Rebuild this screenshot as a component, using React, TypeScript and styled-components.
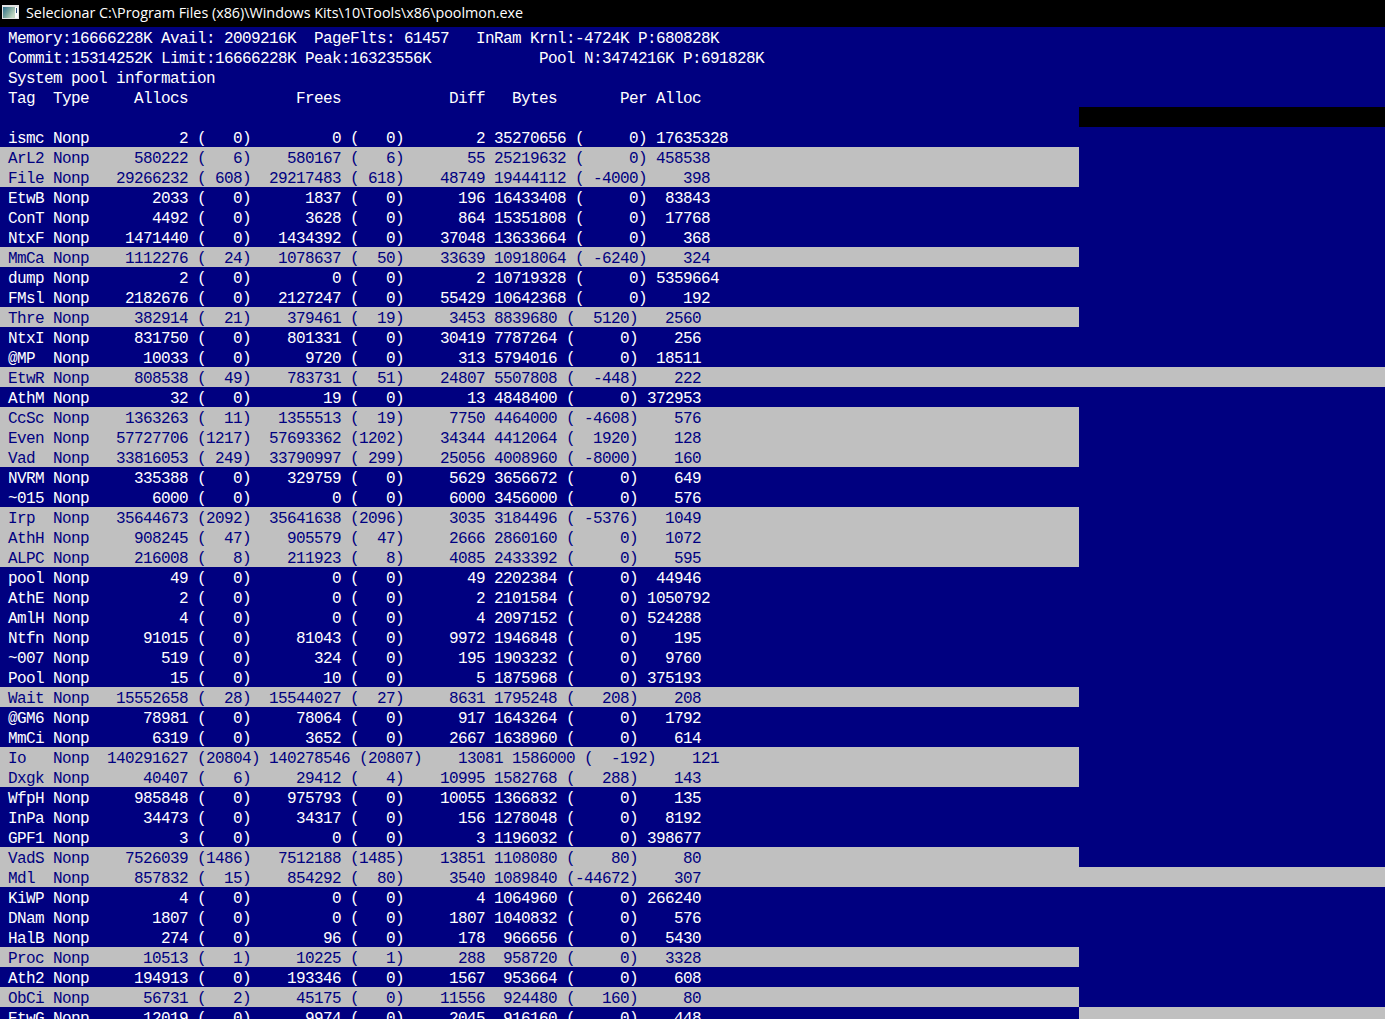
import React from "react";
import styled, { createGlobalStyle } from "styled-components";

const NAVY = "#000080";
const GREY = "#c0c0c0";
const TEXT = "#ffffff";

const GlobalStyle = createGlobalStyle`
  html, body { margin: 0; padding: 0; background: ${NAVY}; overflow: hidden; }
`;

const Window = styled.div`
  display: flex;
  flex-direction: column;
  width: 1385px;
  height: 1019px;
  overflow: hidden;
`;

const TitleBar = styled.div`
  display: flex;
  flex: none;
  align-items: flex-start;
  gap: 7px;
  height: 27px;
  padding: 0 0 0 2px;
  background: #000;
`;

const WindowTitle = styled.span`
  color: #fff;
  font-family: "Open Sans", "Noto Sans", sans-serif;
  font-size: 14.34px;
  line-height: 26px;
  white-space: pre;
`;

const IconSlot = styled.span`
  display: block;
  flex: none;
  width: 17px;
  height: 14px;
  margin-top: 5px;
`;

const Screen = styled.div`
  display: flex;
  flex-direction: column;
  flex: none;
`;

type Tone = "navy" | "grey" | "black";
const bg: Record<Tone, string> = { navy: NAVY, grey: GREY, black: "#000" };

const Row = styled.div`
  display: flex;
  flex: none;
  height: 20px;
`;

const Line = styled.div<{ $tone: Tone }>`
  flex: none;
  box-sizing: border-box;
  width: 1079px;
  height: 20px;
  padding-left: 8px;
  background: ${(p) => bg[p.$tone]};
  color: ${(p) => (p.$tone === "grey" ? NAVY : TEXT)};
  font-family: "Liberation Mono", "DejaVu Sans Mono", monospace;
  font-size: 16px;
  letter-spacing: -0.6016px;
  line-height: 24px;
  white-space: pre;
  font-kerning: none;
`;

const Filler = styled.div<{ $tone: Tone }>`
  flex: 1;
  height: 20px;
  background: ${(p) => bg[p.$tone]};
`;

const ConsoleIcon = () => (
  <IconSlot>
    <svg width="17" height="14" viewBox="0 0 17 14" aria-hidden="true" style={{ display: "block" }}>
      <defs>
        <linearGradient id="pane" x1="0" y1="0" x2="1" y2="0.6">
          <stop offset="0" stopColor="#2f6f8f" />
          <stop offset="0.55" stopColor="#7fa89e" />
          <stop offset="1" stopColor="#c4d8c4" />
        </linearGradient>
      </defs>
      <rect x="0" y="0" width="17" height="14" fill="#e4e4e4" />
      <rect x="1" y="2" width="12" height="11" fill="url(#pane)" />
      <rect x="13" y="2" width="3" height="11" fill="#fafafa" />
      <rect x="14" y="3" width="1" height="5" fill="#2c4f7a" />
    </svg>
  </IconSlot>
);

const header = [
  "Memory:16666228K Avail: 2009216K  PageFlts: 61457   InRam Krnl:-4724K P:680828K",
  "Commit:15314252K Limit:16666228K Peak:16323556K            Pool N:3474216K P:691828K",
  "System pool information",
  "Tag  Type     Allocs            Frees            Diff   Bytes       Per Alloc",
];

// tag allocs (n) frees (n) diff bytes (n) per  kind
// kind: b = navy, g = grey up to the edge of the buffer, w = grey over the whole width, t = navy with stale grey beyond
const data = `ismc 2 0 0 0 2 35270656 0 17635328 b
ArL2 580222 6 580167 6 55 25219632 0 458538 g
File 29266232 608 29217483 618 48749 19444112 -4000 398 g
EtwB 2033 0 1837 0 196 16433408 0 83843 b
ConT 4492 0 3628 0 864 15351808 0 17768 b
NtxF 1471440 0 1434392 0 37048 13633664 0 368 b
MmCa 1112276 24 1078637 50 33639 10918064 -6240 324 g
dump 2 0 0 0 2 10719328 0 5359664 b
FMsl 2182676 0 2127247 0 55429 10642368 0 192 b
Thre 382914 21 379461 19 3453 8839680 5120 2560 g
NtxI 831750 0 801331 0 30419 7787264 0 256 b
@MP 10033 0 9720 0 313 5794016 0 18511 b
EtwR 808538 49 783731 51 24807 5507808 -448 222 w
AthM 32 0 19 0 13 4848400 0 372953 b
CcSc 1363263 11 1355513 19 7750 4464000 -4608 576 g
Even 57727706 1217 57693362 1202 34344 4412064 1920 128 g
Vad 33816053 249 33790997 299 25056 4008960 -8000 160 g
NVRM 335388 0 329759 0 5629 3656672 0 649 b
~015 6000 0 0 0 6000 3456000 0 576 b
Irp 35644673 2092 35641638 2096 3035 3184496 -5376 1049 g
AthH 908245 47 905579 47 2666 2860160 0 1072 g
ALPC 216008 8 211923 8 4085 2433392 0 595 g
pool 49 0 0 0 49 2202384 0 44946 b
AthE 2 0 0 0 2 2101584 0 1050792 b
AmlH 4 0 0 0 4 2097152 0 524288 b
Ntfn 91015 0 81043 0 9972 1946848 0 195 b
~007 519 0 324 0 195 1903232 0 9760 b
Pool 15 0 10 0 5 1875968 0 375193 b
Wait 15552658 28 15544027 27 8631 1795248 208 208 g
@GM6 78981 0 78064 0 917 1643264 0 1792 b
MmCi 6319 0 3652 0 2667 1638960 0 614 b
Io 140291627 20804 140278546 20807 13081 1586000 -192 121 g
Dxgk 40407 6 29412 4 10995 1582768 288 143 g
WfpH 985848 0 975793 0 10055 1366832 0 135 b
InPa 34473 0 34317 0 156 1278048 0 8192 b
GPF1 3 0 0 0 3 1196032 0 398677 b
VadS 7526039 1486 7512188 1485 13851 1108080 80 80 g
Mdl 857832 15 854292 80 3540 1089840 -44672 307 w
KiWP 4 0 0 0 4 1064960 0 266240 b
DNam 1807 0 0 0 1807 1040832 0 576 b
HalB 274 0 96 0 178 966656 0 5430 b
Proc 10513 1 10225 1 288 958720 0 3328 g
Ath2 194913 0 193346 0 1567 953664 0 608 b
ObCi 56731 2 45175 0 11556 924480 160 80 g
EtwG 12019 0 9974 0 2045 916160 0 448 t`;

const formatRow = (f: string[]) => {
  const p = (i: number, n: number) => f[i].padStart(n);
  return `${f[0].padEnd(4)} Nonp ${p(1, 10)} (${p(2, 4)}) ${p(3, 9)} (${p(4, 4)}) ${p(5, 8)} ${p(6, 7)} (${p(7, 6)}) ${p(8, 6)}`;
};

const lineTone: Record<string, Tone> = { b: "navy", g: "grey", w: "grey", t: "navy" };
const fillTone: Record<string, Tone> = { b: "navy", g: "navy", w: "grey", t: "grey" };

const rows = data.split("\n").map((l) => {
  const f = l.split(" ");
  return { text: formatRow(f), kind: f[9] };
});

export default function App() {
  return (
    <Window>
      <GlobalStyle />
      <TitleBar>
        <ConsoleIcon />
        <WindowTitle>Selecionar C:\Program Files (x86)\Windows Kits\10\Tools\x86\poolmon.exe</WindowTitle>
      </TitleBar>
      <Screen>
        {header.map((h) => (
          <Row key={h}>
            <Line $tone="navy">{h}</Line>
            <Filler $tone="navy" />
          </Row>
        ))}
        <Row>
          <Line $tone="navy" />
          <Filler $tone="black" />
        </Row>
        {rows.map((r) => (
          <Row key={r.text}>
            <Line $tone={lineTone[r.kind]}>{r.text}</Line>
            <Filler $tone={fillTone[r.kind]} />
          </Row>
        ))}
      </Screen>
    </Window>
  );
}
